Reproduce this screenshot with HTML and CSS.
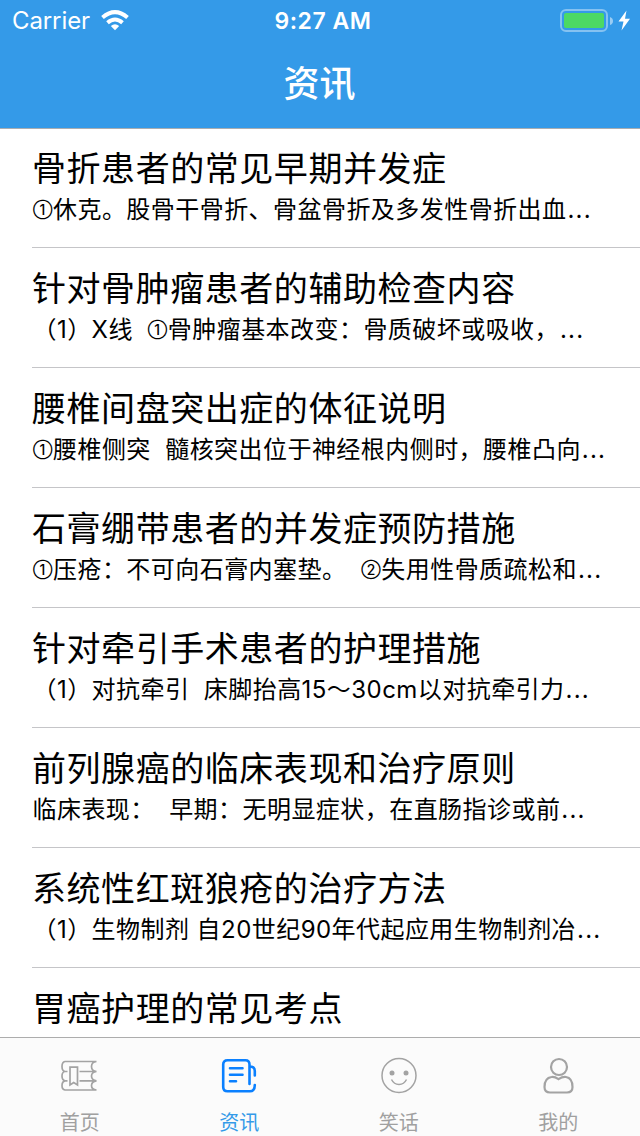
FILE: index.html
```
<!DOCTYPE html>
<html lang="zh-CN">
<head>
<meta charset="utf-8">
<title>资讯</title>
<link rel="stylesheet" href="styles.css">
</head>
<body>
<div class="app">
  <header class="header">
    <div class="status">
      <div class="carrier"><span>Carrier</span>
        <svg class="wifi" width="28" height="21" viewBox="0 0 28 21"><path d="M14 20.200L9.800 16Q14 12.700 18.200 16Z" fill="#fff"/><path d="M6.500 12.700Q14 6.300 21.500 12.700M1.500 7.500Q14 -3.300 26.500 7.500" fill="none" stroke="#fff" stroke-width="4"/></svg>
      </div>
      <div class="time">9:27 AM</div>
      <div class="power">
        <svg width="72" height="24" viewBox="0 0 72 24"><rect x="1" y="1" width="46" height="21" rx="5" fill="none" stroke="#fff" stroke-opacity=".4" stroke-width="2"/><rect x="4" y="4" width="40" height="15" rx="2" fill="#4cd964"/><path d="M50 8Q53 9 53 12T50 16Z" fill="#fff" fill-opacity=".5"/><path d="M66.500 1.500L58.500 12.500H63.500L61.500 21.500L70 9.800H65Z" fill="#fff"/></svg>
      </div>
    </div>
    <h1 class="title">资讯</h1>
  </header>
  <main class="list">
    <article class="item"><h2>骨折患者的常见早期并发症</h2><p><span class="num">①</span>休克。股骨干骨折、骨盆骨折及多发性骨折出血<span class="more">...</span></p></article>
    <article class="item"><h2>针对骨肿瘤患者的辅助检查内容</h2><p>（1）X线  <span class="num">①</span>骨肿瘤基本改变：骨质破坏或吸收，<span class="more">...</span></p></article>
    <article class="item"><h2>腰椎间盘突出症的体征说明</h2><p><span class="num">①</span>腰椎侧突  髓核突出位于神经根内侧时，腰椎凸向<span class="more">...</span></p></article>
    <article class="item"><h2>石膏绷带患者的并发症预防措施</h2><p><span class="num">①</span>压疮：不可向石膏内塞垫。  <span class="num">②</span>失用性骨质疏松和<span class="more">...</span></p></article>
    <article class="item"><h2>针对牵引手术患者的护理措施</h2><p>（1）对抗牵引  床脚抬高15～30cm以对抗牵引力<span class="more">...</span></p></article>
    <article class="item"><h2>前列腺癌的临床表现和治疗原则</h2><p>临床表现：  早期：无明显症状，在直肠指诊或前<span class="more">...</span></p></article>
    <article class="item"><h2>系统性红斑狼疮的治疗方法</h2><p>（1）生物制剂 自20世纪90年代起应用生物制剂冶<span class="more">...</span></p></article>
    <article class="item"><h2>胃癌护理的常见考点</h2></article>
  </main>
  <nav class="tabs">
    <a class="tab"><svg width="40" height="40" viewBox="0 0 40 40" fill="none" stroke="#a3a3a3" stroke-width="1.700"><path d="M36.500 5.500H5Q2 6 2 10.500T5 15.500H7.500M5 15.500Q2 16 2 20T5 24.800H7.500M5 24.800Q2 25.500 2 29.500T5 34H36.500M36.500 5.500Q31.500 6 31.500 10.500T36.500 15.500M19.500 15.500H36.500Q31.500 16 31.500 20T36.500 24.800M19.500 24.800H36.500Q31.500 25.500 31.500 29.500T36.500 34"/><path d="M10 11.200H17.500V29L13.700 26.500L10 29Z"/></svg><span>首页</span></a>
    <a class="tab active"><svg width="40" height="40" viewBox="0 0 40 40" fill="none" stroke="#0a80ff" stroke-width="2.600" stroke-linecap="round"><path d="M30.500 28V8.500Q30.500 4.300 26.500 4.300H8.500Q4.200 4.300 4.200 8.500V31Q4.200 35.300 8.500 35.300H31Q35.800 35.300 35.800 29M30.500 10.500Q35.800 10.500 35.800 15V19.500M11 12.300H23.500M11 18.800H23.500M11 25.300H17"/></svg><span>资讯</span></a>
    <a class="tab"><svg width="40" height="40" viewBox="0 0 40 40" fill="none" stroke="#a3a3a3" stroke-width="1.500"><circle cx="20" cy="19.500" r="17"/><circle cx="13" cy="17" r="2.500" fill="#a3a3a3" stroke="none"/><circle cx="27" cy="17" r="2.500" fill="#a3a3a3" stroke="none"/><path d="M12.500 23.500Q15 28.500 20 28.500T27.500 23.500"/></svg><span>笑话</span></a>
    <a class="tab"><svg width="40" height="40" viewBox="0 0 40 40" fill="none" stroke="#a3a3a3" stroke-width="2.200"><circle cx="21" cy="11" r="8"/><path d="M13.500 21Q16.500 20.500 20.500 23.200Q24.500 20.500 28 21Q34.500 22 34.500 31Q34.500 36.500 29 36.500H12Q6.500 36.500 6.500 31Q6.500 22 13.500 21Z"/></svg><span>我的</span></a>
  </nav>
</div>
</body>
</html>
```
FILE: styles.css
```
* { box-sizing: border-box; }
body, h1, h2, p { margin: 0; }
body { background: #fff; color: #000; font-family: Inter, "Noto Sans CJK SC", sans-serif; overflow: hidden; }
svg { display: block; flex: none; }
.app { width: 640px; height: 1136px; display: flex; flex-direction: column; }
.header { height: 129px; flex: none; background: #349ae8; border-bottom: 1px solid #a9adb1; color: #fff; }
.status { height: 40px; display: grid; grid-template-columns: 1fr auto 1fr; align-items: center; padding: 1px 8px 0 12px; font-size: 24px; line-height: 38px; }
.carrier { display: flex; align-items: center; gap: 11px; letter-spacing: -.1px; }
.time { font-weight: 600; font-size: 23px; letter-spacing: .5px; padding-left: 2px; }
.power { display: flex; justify-content: flex-end; }
.title { height: 88px; line-height: 88px; font-size: 36px; font-weight: 500; text-align: center; padding-right: 1px; }
.list { flex: 1; min-height: 0; overflow: hidden; margin-top: -1px; padding-left: 32px; }
.item { height: 120px; border-bottom: 1px solid #c5c5c8; padding-top: 17px; white-space: pre; text-spacing-trim: space-all; }
.item h2 { font-size: 34px; line-height: 48px; font-weight: 400; letter-spacing: .55px; }
.item p { font-size: 24px; line-height: 34px; letter-spacing: .45px; padding-left: .5px; }
.num { display: inline-block; width: 20.500px; padding-left: .5px; font-size: 14px; line-height: 14px; font-weight: 500; position: relative; top: -3.500px; }
.more { letter-spacing: 1.200px; margin-left: 1px; }
.tabs { height: 99px; flex: none; display: grid; grid-template-columns: repeat(4, 1fr); background: #fbfbfb; border-top: 1px solid #adadad; padding-right: 2px; }
.tab { display: flex; flex-direction: column; align-items: center; padding-top: 18px; color: #a0a0a0; font-size: 20px; line-height: 28px; gap: 13px; }
.active { color: #349ae8; }
```
